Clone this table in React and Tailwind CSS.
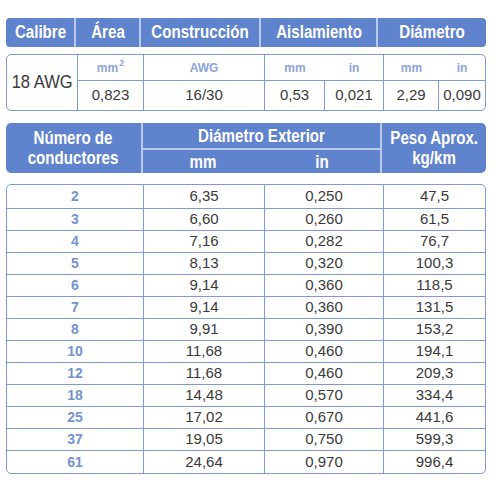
const rows = [
  ["2", "6,35", "0,250", "47,5"],
  ["3", "6,60", "0,260", "61,5"],
  ["4", "7,16", "0,282", "76,7"],
  ["5", "8,13", "0,320", "100,3"],
  ["6", "9,14", "0,360", "118,5"],
  ["7", "9,14", "0,360", "131,5"],
  ["8", "9,91", "0,390", "153,2"],
  ["10", "11,68", "0,460", "194,1"],
  ["12", "11,68", "0,460", "209,3"],
  ["18", "14,48", "0,570", "334,4"],
  ["25", "17,02", "0,670", "441,6"],
  ["37", "19,05", "0,750", "599,3"],
  ["61", "24,64", "0,970", "996,4"]
];

const sans = { fontFamily: '"Liberation Sans", Arial, sans-serif' };

function H({ children }) {
  return <span className="inline-block scale-x-[0.84] whitespace-nowrap">{children}</span>;
}

function TopTable() {
  return (
    <div className="flex flex-col gap-[7px]">
      <div className="flex h-[29px] rounded-[4px] bg-[#5f83cc] text-[18px] font-bold text-white">
        <div className="flex w-[71px] items-center justify-center border-r-2 border-[#b9c9ea]"><H>Calibre</H></div>
        <div className="flex w-[66px] items-center justify-center border-r-2 border-[#b9c9ea]"><H>Área</H></div>
        <div className="flex w-[121px] items-center justify-center border-r-2 border-[#b9c9ea]"><H>Construcción</H></div>
        <div className="flex w-[119px] items-center justify-center border-r-2 border-[#b9c9ea]"><H>Aislamiento</H></div>
        <div className="flex w-[109px] items-center justify-center"><H>Diámetro</H></div>
      </div>
      <div className="flex h-[57px] rounded-[5px] border-[1.5px] border-[#7f9bd6] text-[#3a3a3a]">
        <div className="flex w-[71px] items-center justify-center border-r-[1.5px] border-[#7f9bd6] text-[18px]"><span className="inline-block scale-x-[0.92]">18 AWG</span></div>
        <div className="flex flex-1 flex-col">
          <div className="flex h-[26px] border-b-[1.5px] border-[#7f9bd6] text-[12px] font-bold text-[#8ba5d8]">
            <div className="flex w-[66px] items-center justify-center border-r-[1.5px] border-[#7f9bd6]">mm<sup className="ml-[1px] text-[9px]">2</sup></div>
            <div className="flex w-[121px] items-center justify-center border-r-[1.5px] border-[#7f9bd6]">AWG</div>
            <div className="flex w-[60px] items-center justify-center">mm</div>
            <div className="flex w-[59px] items-center justify-center border-r-[1.5px] border-[#7f9bd6]">in</div>
            <div className="flex w-[55px] items-center justify-center">mm</div>
            <div className="flex flex-1 items-center justify-center">in</div>
          </div>
          <div className="flex flex-1 text-[15px]">
            <div className="flex w-[66px] items-center justify-center border-r-[1.5px] border-[#7f9bd6]">0,823</div>
            <div className="flex w-[121px] items-center justify-center border-r-[1.5px] border-[#7f9bd6]">16/30</div>
            <div className="flex w-[60px] items-center justify-center border-r-[1.5px] border-[#7f9bd6]">0,53</div>
            <div className="flex w-[59px] items-center justify-center border-r-[1.5px] border-[#7f9bd6]">0,021</div>
            <div className="flex w-[55px] items-center justify-center border-r-[1.5px] border-[#7f9bd6]">2,29</div>
            <div className="flex flex-1 items-center justify-center">0,090</div>
          </div>
        </div>
      </div>
    </div>
  );
}

function BottomTable() {
  return (
    <div className="flex flex-col gap-[11px]">
      <div className="flex h-[50px] rounded-[5px] bg-[#5f83cc] text-[18px] font-bold leading-[20px] text-white">
        <div className="flex w-[137px] flex-col items-center justify-center border-r-2 border-[#b9c9ea]">
          <H>Número de</H>
          <H>conductores</H>
        </div>
        <div className="flex w-[240px] flex-col border-r-2 border-[#b9c9ea]">
          <div className="flex h-[27px] items-center justify-center border-b-2 border-[#b9c9ea]"><H>Diámetro Exterior</H></div>
          <div className="flex flex-1">
            <div className="flex w-[121px] items-center justify-center"><H>mm</H></div>
            <div className="flex flex-1 items-center justify-center"><H>in</H></div>
          </div>
        </div>
        <div className="flex flex-1 flex-col items-center justify-center">
          <H>Peso Aprox.</H>
          <H>kg/km</H>
        </div>
      </div>
      <div className="overflow-hidden rounded-[5px] border-[1.5px] border-[#7f9bd6] text-[15px] text-[#3a3a3a]">
        {rows.map(([n, mm, inch, kg], i) => (
          <div key={n} className={`flex ${i === 0 ? "h-[24px]" : "h-[22px]"} ${i < rows.length - 1 ? "border-b-[1.5px] border-[#7f9bd6]" : ""}`}>
            <div className="flex w-[137px] items-center justify-center border-r-[1.5px] border-[#7f9bd6] text-[14px] font-bold text-[#7494cd]">{n}</div>
            <div className="flex w-[121px] items-center justify-center border-r-[1.5px] border-[#7f9bd6]">{mm}</div>
            <div className="flex w-[119px] items-center justify-center border-r-[1.5px] border-[#7f9bd6]">{inch}</div>
            <div className="flex flex-1 items-center justify-center">{kg}</div>
          </div>
        ))}
      </div>
    </div>
  );
}

export default function App() {
  return (
    <div className="h-[500px] w-[500px] bg-white" style={sans}>
      <div className="flex w-[486px] flex-col gap-[12px] pl-[6px] pt-[18px]">
        <TopTable />
        <BottomTable />
      </div>
    </div>
  );
}
